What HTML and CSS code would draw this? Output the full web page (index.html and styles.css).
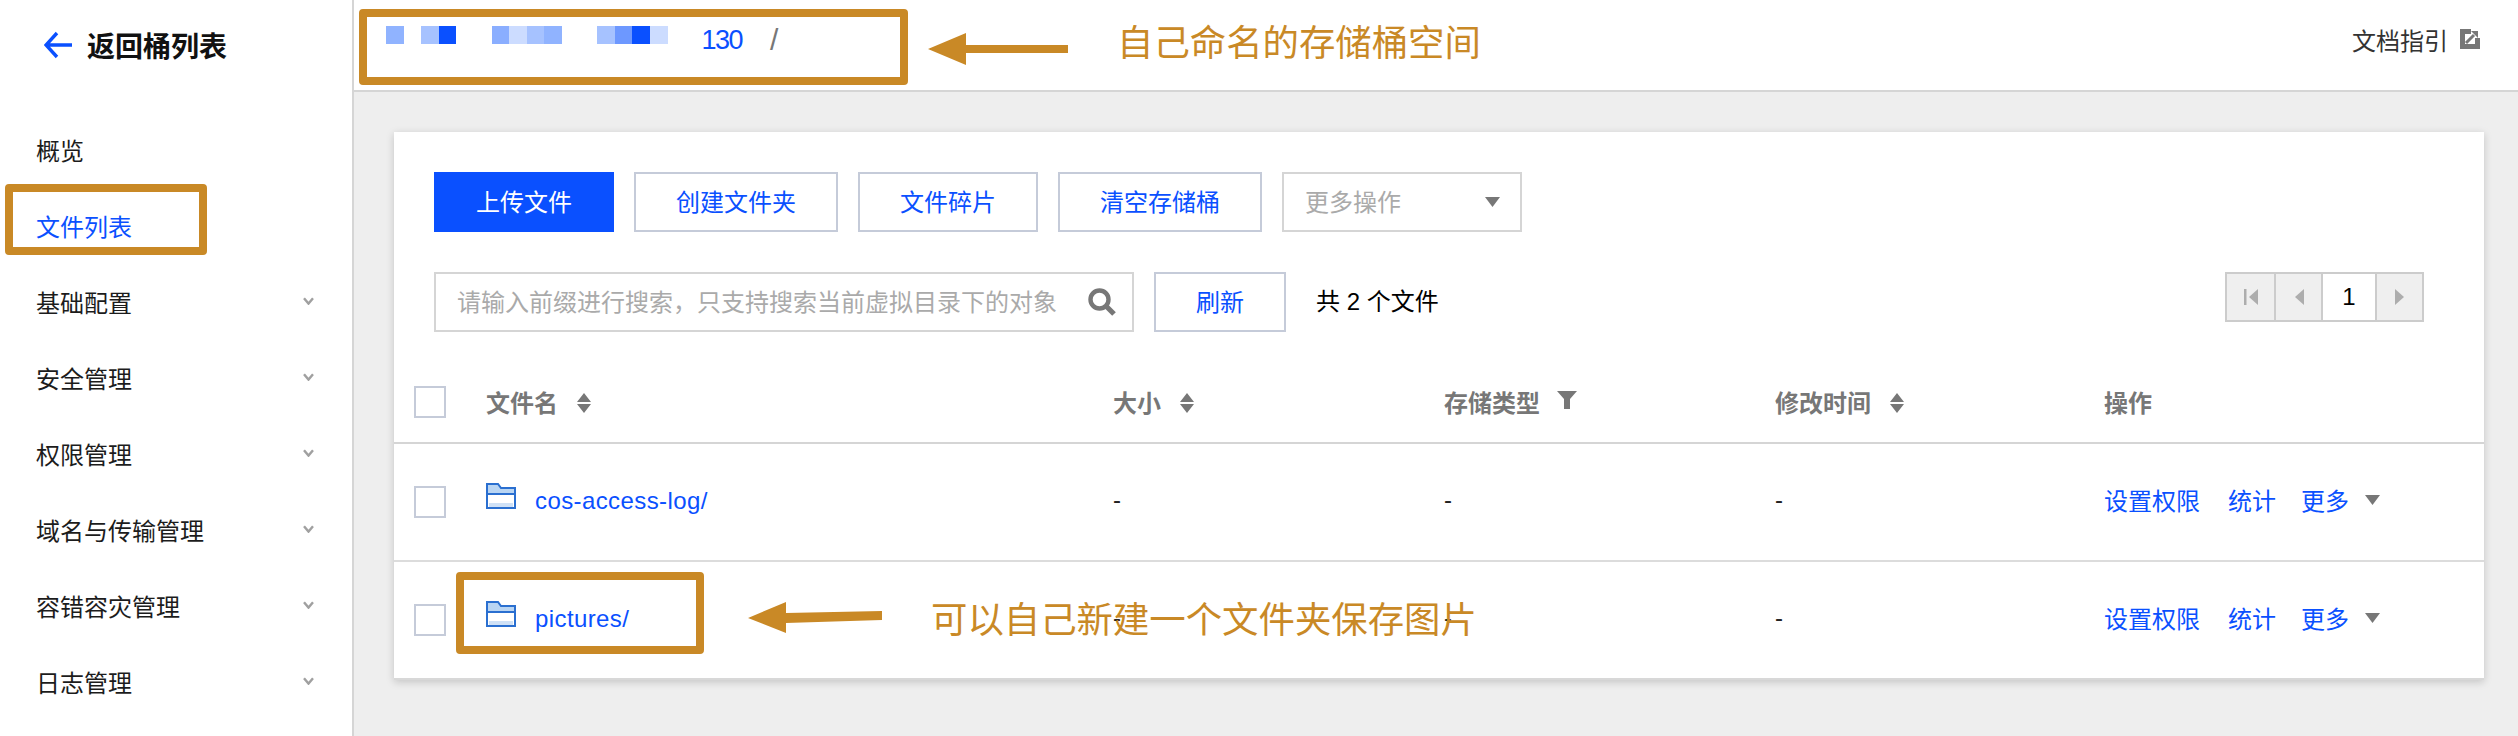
FILE: index.html
```html
<!DOCTYPE html>
<html lang="zh-CN">
<head>
<meta charset="utf-8">
<title>文件列表</title>
<link rel="stylesheet" href="styles.css">
</head>
<body>
<svg class="defs" width="0" height="0" aria-hidden="true">
  <defs>
    <symbol id="sort" viewBox="0 0 16 20"><path d="M8 0 15 9H1ZM1 11H15L8 20Z"/></symbol>
    <symbol id="chev" viewBox="0 0 11 8"><path d="M1 1.2 5.5 6.6 10 1.2" fill="none" stroke="#a0a0a0" stroke-width="2.4"/></symbol>
    <symbol id="folder" viewBox="0 0 30 26">
      <path d="M1 1H12L15 5H29V25H1Z" fill="#fff"/>
      <path d="M1 1H12L15 5H29V11H1Z" fill="#b9d5f3"/>
      <path d="M3 20H27V24H3Z" fill="#cfe1f6"/>
      <path d="M1 25V1H12L15 5H29V25ZM1 11H29" fill="none" stroke="#2a6fd0" stroke-width="2"/>
    </symbol>
    <symbol id="tri" viewBox="0 0 15 10"><path d="M0 0H15L7.5 10Z"/></symbol>
  </defs>
</svg>
<div class="page">
  <aside class="sidebar">
    <div class="back">
      <svg class="back-arrow" viewBox="0 0 28 28"><path d="M13 2 2 14 13 26M2 14H28" fill="none" stroke="#0a50ff" stroke-width="3.4"/></svg>
      <span>返回桶列表</span>
    </div>
    <nav class="nav">
      <div class="nav-item">概览</div>
      <div class="nav-item nav-active">文件列表</div>
      <div class="nav-item">基础配置<svg class="chev"><use href="#chev"/></svg></div>
      <div class="nav-item">安全管理<svg class="chev"><use href="#chev"/></svg></div>
      <div class="nav-item">权限管理<svg class="chev"><use href="#chev"/></svg></div>
      <div class="nav-item">域名与传输管理<svg class="chev"><use href="#chev"/></svg></div>
      <div class="nav-item">容错容灾管理<svg class="chev"><use href="#chev"/></svg></div>
      <div class="nav-item">日志管理<svg class="chev"><use href="#chev"/></svg></div>
    </nav>
  </aside>
  <main class="main">
    <header class="topbar">
      <div class="mosaic">
        <i class="m1"></i><i></i><i class="m2"></i><i class="m0"></i><i></i><i></i>
        <i class="m3"></i><i class="m4"></i><i class="m2"></i><i class="m1"></i><i></i><i></i>
        <i class="m2"></i><i class="m5"></i><i class="m0"></i><i class="m4"></i>
      </div>
      <span class="bucket-id">130</span>
      <span class="crumb-sep">/</span>
      <div class="doc-link">文档指引
        <svg class="ext" viewBox="0 0 20 20"><path d="M0 0H20V20H0Z" fill="#777"/><path d="M5 5H15V15H5Z" fill="#fff"/><path d="M11 0H20V9H15V5H11Z" fill="#fff"/><path d="M6 14 14 6" stroke="#777" stroke-width="3"/><path d="M11 2H18V9Z" fill="#777"/></svg>
      </div>
    </header>
    <section class="content">
      <div class="card">
        <div class="toolbar">
          <button class="btn btn-primary btn-180">上传文件</button>
          <button class="btn btn-205">创建文件夹</button>
          <button class="btn btn-180">文件碎片</button>
          <button class="btn btn-205">清空存储桶</button>
          <div class="select">更多操作<svg class="select-tri"><use href="#tri"/></svg></div>
        </div>
        <div class="toolbar toolbar-search">
          <div class="search">
            <span>请输入前缀进行搜索，只支持搜索当前虚拟目录下的对象</span>
            <svg class="search-icon" viewBox="0 0 28 28"><circle cx="11.5" cy="11.5" r="9" fill="none" stroke="#777" stroke-width="4.4"/><path d="M18 18 26 26" stroke="#777" stroke-width="5.2"/></svg>
          </div>
          <button class="btn btn-132">刷新</button>
          <span class="count">共 2 个文件</span>
          <div class="pager">
            <div class="pg pg-off"><svg viewBox="0 0 14 16" class="pg-ico"><path d="M0 0H2.5V16H0ZM14 0V16L5 8Z"/></svg></div>
            <div class="pg pg-off"><svg viewBox="0 0 14 16" class="pg-ico"><path d="M12 0V16L3 8Z"/></svg></div>
            <div class="pg pg-cur">1</div>
            <div class="pg pg-off"><svg viewBox="0 0 14 16" class="pg-ico"><path d="M2 0V16L11 8Z"/></svg></div>
          </div>
        </div>
        <div class="row row-head">
          <div class="check-cell"><span class="check"></span></div>
          <div class="th">文件名<svg class="sort"><use href="#sort"/></svg></div>
          <div class="th">大小<svg class="sort"><use href="#sort"/></svg></div>
          <div class="th">存储类型<svg class="filter" viewBox="0 0 20 18"><path d="M0 0H20L13 8V18H7V8Z" fill="#777"/></svg></div>
          <div class="th">修改时间<svg class="sort"><use href="#sort"/></svg></div>
          <div class="th">操作</div>
        </div>
        <div class="row">
          <div class="check-cell"><span class="check"></span></div>
          <div class="name"><svg class="folder"><use href="#folder"/></svg><a class="link">cos-access-log/</a></div>
          <div class="td">-</div>
          <div class="td">-</div>
          <div class="td">-</div>
          <div class="ops"><a class="link">设置权限</a><a class="link">统计</a><a class="link">更多</a><svg class="op-tri"><use href="#tri"/></svg></div>
        </div>
        <div class="row">
          <div class="check-cell"><span class="check"></span></div>
          <div class="name"><svg class="folder"><use href="#folder"/></svg><a class="link">pictures/</a></div>
          <div class="td">-</div>
          <div class="td">-</div>
          <div class="td">-</div>
          <div class="ops"><a class="link">设置权限</a><a class="link">统计</a><a class="link">更多</a><svg class="op-tri"><use href="#tri"/></svg></div>
        </div>
      </div>
    </section>
  </main>

  <div class="mark mark-bucket"></div>
  <div class="mark mark-nav"></div>
  <div class="mark mark-folder"></div>
  <svg class="arrow arrow-top" viewBox="0 0 140 32"><path d="M0 16 38 0V12H140V20H38V32Z" fill="#c98926"/></svg>
  <svg class="arrow arrow-low" viewBox="0 0 134 31"><path d="M0 16 38 0V11L134 9V18L38 21V31Z" fill="#c98926"/></svg>
  <div class="note note-top">自己命名的存储桶空间</div>
  <div class="note note-low">可以自己新建一个文件夹保存图片</div>
</div>
</body>
</html>
```
FILE: styles.css
```css
* { box-sizing: border-box; }
html, body { margin: 0; padding: 0; }
body {
  font-family: "Liberation Sans", "Noto Sans CJK SC", sans-serif;
  font-size: 24px;
  color: #222;
  background: #fff;
}
.defs { position: absolute; }
.page {
  position: relative;
  display: flex;
  width: 2518px;
  height: 736px;
  overflow: hidden;
}

/* sidebar */
.sidebar {
  flex: 0 0 354px;
  border-right: 2px solid #d5d5d5;
  background: #fff;
}
.back {
  display: flex;
  align-items: center;
  gap: 15px;
  height: 92px;
  padding: 0 0 3px 44px;
  font-size: 28px;
  font-weight: 700;
  color: #111;
}
.back-arrow { width: 28px; height: 28px; }
.nav { margin-top: 22px; }
.nav-item {
  display: flex;
  align-items: center;
  justify-content: space-between;
  height: 76px;
  padding: 0 38px 5px 36px;
  color: #1c1c1c;
}
.nav-active { color: #0a50ff; }
.chev { width: 11px; height: 8px; margin-top: -2px; }

/* top bar */
.main { flex: 1; display: flex; flex-direction: column; background: #eee; min-width: 0; }
.topbar {
  display: flex;
  align-items: flex-start;
  height: 92px;
  padding: 0 38px 0 32px;
  background: #fff;
  border-bottom: 2px solid #d5d5d5;
}
.mosaic {
  display: grid;
  grid-template-columns: repeat(16, 17.6px);
  height: 18px;
  margin-top: 26px;
}
.m0 { background: #0a50ff; }
.m1 { background: #90b3ff; }
.m2 { background: #a6c2ff; }
.m3 { background: #8aaeff; }
.m4 { background: #ccdcff; }
.m5 { background: #6d98ff; }
.bucket-id {
  margin: 25px 0 0 34px;
  font-size: 27px;
  line-height: 30px;
  letter-spacing: -1.5px;
  color: #0a50ff;
}
.crumb-sep {
  margin: 23px 0 0 28px;
  font-size: 30px;
  line-height: 34px;
  color: #777;
}
.doc-link {
  display: flex;
  align-items: center;
  gap: 12px;
  height: 78px;
  margin-left: auto;
  color: #333;
}
.ext { width: 20px; height: 20px; }

/* card */
.content { padding: 40px 34px 0 40px; }
.card {
  background: #fff;
  border-bottom: 2px solid #d8d8d8;
  box-shadow: 0 2px 8px rgba(0, 0, 0, .18);
}
.toolbar {
  display: flex;
  gap: 20px;
  padding: 40px 60px 0 40px;
}
.btn {
  height: 60px;
  padding: 0 0 3px;
  font: inherit;
  color: #0a50ff;
  background: #fff;
  border: 2px solid #c5cbd9;
  border-radius: 0;
}
.btn-primary { color: #fff; background: #0a50ff; border-color: #0a50ff; }
.btn-180 { width: 180px; }
.btn-205 { width: 204px; }
.btn-132 { width: 132px; }
.select {
  display: flex;
  align-items: center;
  justify-content: space-between;
  width: 240px;
  height: 60px;
  padding: 0 20px 3px 21px;
  color: #aaa;
  border: 2px solid #d5d5d5;
}
.select-tri { width: 15px; height: 10px; margin-top: 3px; fill: #777; }
.search {
  display: flex;
  align-items: center;
  justify-content: space-between;
  width: 700px;
  height: 60px;
  padding: 0 16px 3px 21px;
  color: #aaa;
  border: 2px solid #d5d5d5;
}
.search-icon { width: 28px; height: 28px; margin-top: 3px; }
.count { margin-left: 10px; line-height: 60px; color: #000; white-space: pre; }
.pager { display: flex; margin-left: auto; height: 50px; border: 2px solid #ccc; }
.pg { display: flex; align-items: center; justify-content: center; width: 47px; }
.pg + .pg { border-left: 2px solid #ccc; }
.pg-off { background: #efefef; }
.pg-cur { width: 54px; color: #000; background: #fff; }
.pg-ico { width: 14px; height: 16px; fill: #adadad; }

/* table */
.row {
  display: grid;
  grid-template-columns: 92px 627px 331px 331px 329px 1fr;
  align-items: center;
  height: 118px;
  border-bottom: 2px solid #dcdcdc;
}
.row:last-child { height: 116px; border-bottom: 0; }
.row-head { height: 112px; padding-top: 30px; border-bottom-color: #d5d5d5; }
.check-cell { padding-left: 20px; display: flex; }
.check { width: 32px; height: 32px; border: 2px solid #c5cbd9; background: #fff; }
.th { display: flex; align-items: center; padding-bottom: 2px; font-weight: 700; color: #777; }
.sort { width: 16px; height: 20px; margin: 4px 0 0 18px; fill: #777; }
.filter { width: 20px; height: 18px; margin: -2px 0 0 17px; }
.name { display: flex; align-items: center; padding-bottom: 2px; }
.folder { width: 30px; height: 26px; margin-top: -10px; }
.name .link { margin-left: 19px; letter-spacing: .4px; }
.link { color: #0a50ff; }
.td { color: #222; padding-bottom: 4px; }
.ops { display: flex; align-items: center; padding-bottom: 6px; }
.ops .link + .link { margin-left: 28px; }
.ops .link + .link + .link { margin-left: 25px; }
.op-tri { width: 15px; height: 10px; margin: 2px 0 0 16px; fill: #777; }

/* annotations drawn over the screenshot */
.mark {
  position: absolute;
  border: 8px solid #c98926;
  border-radius: 4px;
}
.mark-bucket { left: 359px; top: 9px; width: 549px; height: 76px; }
.mark-nav { left: 5px; top: 184px; width: 202px; height: 71px; }
.mark-folder { left: 456px; top: 572px; width: 248px; height: 82px; }
.arrow { position: absolute; }
.arrow-top { left: 928px; top: 33px; width: 140px; height: 32px; }
.arrow-low { left: 748px; top: 602px; width: 134px; height: 31px; }
.note {
  position: absolute;
  font-size: 36.4px;
  line-height: 44px;
  color: #c98926;
  white-space: nowrap;
}
.note-top { left: 1117px; top: 22px; }
.note-low { left: 931px; top: 599px; }
```
